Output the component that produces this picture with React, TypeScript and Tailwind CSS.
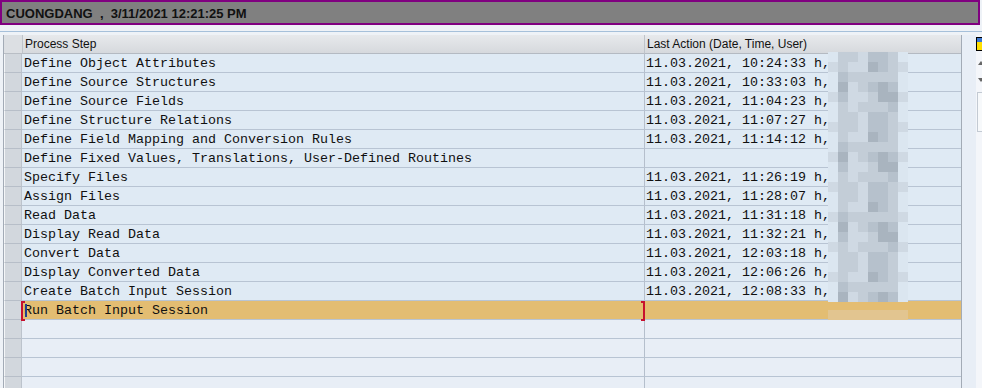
import React from 'react'

const steps: [string, string][] = [
  ['Define Object Attributes', '11.03.2021, 10:24:33 h,'],
  ['Define Source Structures', '11.03.2021, 10:33:03 h,'],
  ['Define Source Fields', '11.03.2021, 11:04:23 h,'],
  ['Define Structure Relations', '11.03.2021, 11:07:27 h,'],
  ['Define Field Mapping and Conversion Rules', '11.03.2021, 11:14:12 h,'],
  ['Define Fixed Values, Translations, User-Defined Routines', ''],
  ['Specify Files', '11.03.2021, 11:26:19 h,'],
  ['Assign Files', '11.03.2021, 11:28:07 h,'],
  ['Read Data', '11.03.2021, 11:31:18 h,'],
  ['Display Read Data', '11.03.2021, 11:32:21 h,'],
  ['Convert Data', '11.03.2021, 12:03:18 h,'],
  ['Display Converted Data', '11.03.2021, 12:06:26 h,'],
  ['Create Batch Input Session', '11.03.2021, 12:08:33 h,'],
]

// pixelated blur over the user names
const shades = ['#dbe6f0', '#cfd9e3', '#c3cdd7', '#b6c1cc', '#a9b4bf']
const blurRows = 25
const blurCols = 8
const shadeAt = (r: number, c: number) => {
  if (c === 0 || c === 7) return r % 3 === 1 ? shades[1] : shades[0]
  const seed = (r * 5 + c * 3 + ((r * c) % 7)) % 5
  const dark = c === 1 || (c >= 4 && c <= 6)
  if (dark) return seed < 3 ? shades[3 + (seed % 2)] : shades[2]
  return seed < 2 ? shades[2] : shades[1]
}

const Selector = () => (
  <div className="w-[18px] shrink-0 bg-[#d2d7dd] border-l border-l-[#f4f6f8] border-r border-r-[#bcc3cc] border-b border-b-[#b7bec8]" />
)

const mono = "font-['Liberation_Mono',monospace] text-[13.33px] leading-[19px] text-[#101010]"

const Row = ({ step, action, bg }: { step: string; action: string; bg: string }) => (
  <div className="flex h-[19px]">
    <Selector />
    <div className={`w-[622px] shrink-0 border-b border-[#b8c4d3] pl-[2px] whitespace-pre overflow-hidden ${bg} ${mono}`}>{step}</div>
    <div className={`flex-1 border-l border-b border-l-[#b5bfcc] border-b-[#b8c4d3] pl-[1px] whitespace-pre overflow-hidden ${bg} ${mono}`}>{action}</div>
  </div>
)

export default function App() {
  return (
    <div className="relative w-[982px] h-[388px] overflow-hidden bg-[#eef2f7]">
      <div className="w-[980px] h-[25px] border-2 border-[#800080] bg-[#808080] flex items-center pl-[4px]">
        <span className="font-['Liberation_Sans',Arial,sans-serif] font-bold text-[13px] leading-[15px] pt-px text-[#111] whitespace-pre">CUONGDANG  ,  3/11/2021 12:21:25 PM</span>
      </div>
      <div className="mt-[6px] h-px bg-[#a6c0da]" />
      <div className="flex mt-[3px]">
        <div className="ml-[3px] w-[959px] border-l border-r border-[#a3abb6]">
          <div className="flex h-[19px]">
            <div className="w-[18px] shrink-0 bg-[#dcdfe3] border-b border-[#b9bec5]" />
            <div className="w-[622px] shrink-0 border-l border-[#bfc4ca] border-b border-b-[#b4bac2] bg-gradient-to-b from-[#e7e9ec] to-[#d6d9dd] pl-[2px] font-['Liberation_Sans',Arial,sans-serif] text-[12px] leading-[19px] text-[#111]">Process Step</div>
            <div className="flex-1 border-l border-[#bfc4ca] border-b border-b-[#b4bac2] bg-gradient-to-b from-[#e7e9ec] to-[#d6d9dd] pl-[2px] font-['Liberation_Sans',Arial,sans-serif] text-[12px] leading-[19px] text-[#111]">Last Action (Date, Time, User)</div>
          </div>
          {steps.map(([s, a]) => (
            <Row key={s} step={s} action={a} bg="bg-[#dfeaf4]" />
          ))}
          <div className="relative">
            <Row step="Run Batch Input Session" action="" bg="bg-[#e3bd72]" />
            <div className="absolute left-[17px] top-0 h-[20px] w-[4px] border-l-2 border-t-2 border-b-2 border-[#c8102e]" />
            <div className="absolute left-[637px] top-0 h-[20px] w-[4px] border-r-2 border-t-2 border-b-2 border-[#c8102e]" />
            <div className="absolute left-[21px] top-[3px] h-[13px] w-[2px] bg-[#1f3f8f]" />
          </div>
          {[0, 1, 2, 3].map((i) => (
            <Row key={i} step="" action="" bg="bg-[#e8eef6]" />
          ))}
        </div>
        <div className="w-[14px] shrink-0 bg-[#e8eef6]" />
        <div className="flex-1 bg-[#f4f6fa] relative">
          <div className="absolute left-0 top-[2px] w-[8px] h-[14px] border border-black bg-[#ffe000]">
            <div className="h-[4px] bg-[#3c78d0]" />
          </div>
          <svg className="absolute left-[2px] top-[26px]" width="6" height="4" viewBox="0 0 6 4">
            <path d="M0 4 L3 0 L6 4 Z" fill="#666" />
          </svg>
          <svg className="absolute left-[2px] top-[43px]" width="6" height="4" viewBox="0 0 6 4">
            <path d="M0 0 L3 4 L6 0 Z" fill="#666" />
          </svg>
          <div className="absolute left-[1px] top-[57px] w-[10px] h-[40px] border border-[#c3cad3] bg-[#f7f9fb]" />
        </div>
      </div>
      <div className="absolute left-[828px] top-[52px] w-[80px] grid grid-cols-8">
        {Array.from({ length: blurRows * blurCols }).map((_, i) => {
          const r = Math.floor(i / blurCols)
          const c = i % blurCols
          return <div key={i} className="h-[10px]" style={{ background: shadeAt(r, c) }} />
        })}
      </div>
      <div className="absolute left-[828px] top-[302px] w-[80px] h-[8px] bg-[#e4bd72]" />
      <div className="absolute left-[828px] top-[310px] w-[80px] h-[10px] bg-[#e2c590]" />
    </div>
  )
}
